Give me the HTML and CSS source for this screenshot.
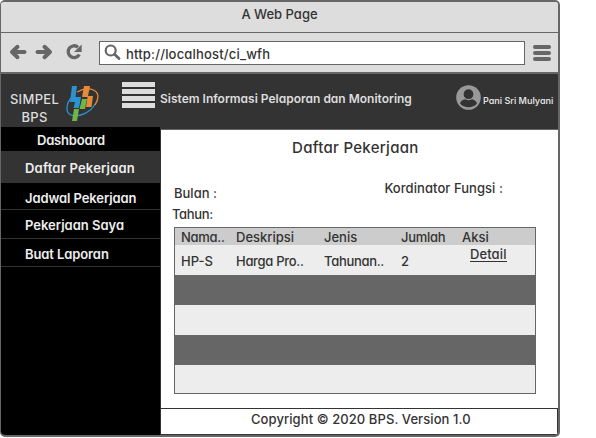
FILE: index.html
```html
<!DOCTYPE html>
<html lang="id">
<head>
<meta charset="utf-8">
<title>A Web Page</title>
<link rel="stylesheet" href="styles.css">
</head>
<body>
<div class="window">
  <div class="titlebar"><span class="t-title">A Web Page</span></div>
  <div class="toolbar">
    <svg class="nav" width="76" height="18" viewBox="0 0 76 18" fill="none" stroke="#666">
      <path d="M15.500 9H4M8.500 3.800L3 9l5.500 5.200" stroke-width="4" stroke-linecap="round" stroke-linejoin="round"/>
      <path d="M28.500 9h12M35.500 3.800L41 9l-5.500 5.200" stroke-width="4" stroke-linecap="round" stroke-linejoin="round"/>
      <path d="M69 4.200A5.900 5.900 0 1 0 70.300 11.500" stroke-width="3.300"/>
      <path d="M72.700 1.500v7.500h-7.700z" fill="#666" stroke="none"/>
    </svg>
    <div class="address">
      <svg width="17" height="17" viewBox="0 0 17 17" fill="none" stroke="#666"><circle cx="6.700" cy="6.500" r="5" stroke-width="2.200"/><path d="M10.500 10.300l4.500 4.300" stroke-width="2.800" stroke-linecap="round"/></svg>
      <span class="t-url">http://localhost/ci_wfh</span>
    </div>
    <div class="menu"><i></i><i></i><i></i></div>
  </div>
  <header class="header">
    <div class="brand"><span>SIMPEL</span><span>BPS</span></div>
    <svg class="logo" width="34" height="38" viewBox="0 0 34 38">
      <path d="M6 12C0 18-1 28 5 30c8 3 20-3 24-11" fill="none" stroke="#2b93d0" stroke-width="1.300"/>
      <path d="M11 7c9-5 20-4 21 4 0 4-1 6-3 9" fill="none" stroke="#e58b3a" stroke-width="1.300"/>
      <path d="M6 1h5l-1.500 11H15l-2 11H7.500l1.500-6H4z" fill="#2b93d0"/>
      <path d="M18 1h6l-2 10h5l-1.500 11h-5.500l1.500-10h-5.500z" fill="#e58b3a"/>
      <path d="M16 14h5l-2 10h-6l-2 12H6l2-12h5.500z" fill="#6fb644"/>
    </svg>
    <div class="bars"><i></i><i></i><i></i><i></i></div>
    <span class="t-system">Sistem Informasi Pelaporan dan Monitoring</span>
    <svg class="avatar" width="25" height="25" viewBox="0 0 25 25"><circle cx="12.500" cy="12.500" r="12.300" fill="#999"/><path d="M4 18.500c1-3 3.500-4 6-4.500 1.500 1 3.500 1 5 0 2.500.5 5 1.500 6 4.500-4 5-13 5-17 0z" fill="#333"/><circle cx="12.500" cy="9.200" r="5.500" fill="#333" stroke="#999" stroke-width="1.200"/></svg>
    <span class="t-user">Pani Sri Mulyani</span>
  </header>
  <div class="body">
    <nav class="sidebar">
      <a class="item first"><span class="t-dash">Dashboard</span></a>
      <a class="item active"><span class="t-daftar">Daftar Pekerjaan</span></a>
      <a class="item jadwal"><span class="t-jadwal">Jadwal Pekerjaan</span></a>
      <a class="item saya"><span class="t-saya">Pekerjaan Saya</span></a>
      <a class="item buat"><span class="t-buat">Buat Laporan</span></a>
    </nav>
    <main class="main">
      <h1><span class="t-head">Daftar Pekerjaan</span></h1>
      <div class="filters">
        <div class="left"><span class="t-bulan">Bulan :</span><span class="t-tahun">Tahun:</span></div>
        <span class="t-kord">Kordinator Fungsi :</span>
      </div>
      <div class="table">
        <div class="row head"><span class="c-tight">Nama..</span><span>Deskripsi</span><span class="c-jenis">Jenis</span><span class="c-tight">Jumlah</span><span>Aksi</span></div>
        <div class="row"><span>HP-S</span><span class="c-tight">Harga Pro..</span><span class="c-tight">Tahunan..</span><span>2</span><a class="detail">Detail</a></div>
        <div class="row dark"></div>
        <div class="row"></div>
        <div class="row dark"></div>
        <div class="row last"></div>
      </div>
      <footer><span class="t-copy">Copyright © 2020 BPS. Version 1.0</span></footer>
    </main>
  </div>
</div>
</body>
</html>
```
FILE: styles.css
```css
* { box-sizing: border-box; }
body {
  margin: 0;
  background: #fff;
  color: #333;
  font: 500 13px/18px Inter, "Liberation Sans", sans-serif;
  font-feature-settings: "cv11", "ss03";
  white-space: nowrap;
}
.window {
  width: 560px;
  height: 437px;
  border: 2px solid #666;
  border-left-width: 1px;
  border-radius: 5px;
  overflow: hidden;
  display: flex;
  flex-direction: column;
}
.titlebar {
  height: 31px;
  flex: none;
  background: #ddd;
  border-bottom: 1px solid #666;
  text-align: center;
  padding-top: 3px;
}
.toolbar {
  height: 41px;
  flex: none;
  background: #ddd;
  border-bottom: 2px solid #666;
  display: flex;
  align-items: flex-start;
  padding: 8px 0 0 9px;
}
.nav { flex: none; margin: 2px 1px 0 -1px; }
.address {
  width: 426px;
  height: 24px;
  margin-left: 13px;
  background: #fff;
  border: 1px solid #666;
  display: flex;
  align-items: center;
  padding: 0 0 0 4px;
  gap: 5px;
}
.address svg { flex: none; margin-bottom: 2px; }
.t-url { letter-spacing: 0.18px; padding-top: 2px; }
.menu { width: 18px; margin: 4px 0 0 8px; display: grid; gap: 2px; }
.menu i { height: 4px; border-radius: 2px; background: #666; }
.header {
  height: 53px;
  flex: none;
  background: #333;
  color: #ddd;
  display: flex;
  align-items: flex-start;
}
.brand {
  width: 53px;
  margin: 16px 0 0 7px;
  display: grid;
  text-align: center;
  letter-spacing: 0.3px;
  font-weight: 550;
}
.logo { margin: 11px 0 0 5px; flex: none; }
.bars { width: 33px; margin: 8px 0 0 22px; display: grid; gap: 2px; flex: none; }
.bars i { height: 5px; background: #ddd; }
.t-system { width: 252px; margin: 16px 0 0 5px; font-size: 12px; font-weight: 600; }
.avatar { margin: 11px 0 0 44px; flex: none; }
.t-user { margin: 18px 0 0 2px; font-size: 9px; font-weight: 600; }
.body { display: flex; flex: 1; }
.sidebar { width: 160px; background: #000; color: #eee; border-right: 1px solid #333; font-weight: 600; }
.item { display: block; padding-left: 24px; border-bottom: 1px solid #333; }
.first { height: 25px; padding: 4px 0 0 36px; }
.active { height: 31px; background: #333; padding-top: 7px; }
.jadwal { height: 27px; padding-top: 6px; }
.saya { height: 29px; padding-top: 6px; }
.buat { height: 28px; padding-top: 6px; }
.t-dash { letter-spacing: -0.2px; }
.t-daftar { letter-spacing: 0.2px; }
.t-jadwal { letter-spacing: -0.1px; }
.t-buat { letter-spacing: -0.1px; }
.main { flex: 1; border-top: 2px solid #333; display: flex; flex-direction: column; }
h1 { margin: 0; height: 51px; padding: 9px 0 0 131px; border-top: 1px solid #666; font-size: 15px; font-weight: 450; }
.t-head { letter-spacing: 0.3px; }
.filters { height: 47px; display: flex; justify-content: space-between; padding: 0 55px 0 11px; }
.left { display: grid; grid-template-rows: 21px 18px; padding-top: 4px; align-content: start; }
.t-bulan { padding-left: 2px; }
.t-tahun { letter-spacing: -0.35px; }
.t-kord { margin-top: -1px; letter-spacing: 0.06px; }
.table { width: 362px; height: 167px; margin-left: 13px; border: 1px solid #666; }
.row {
  height: 30px;
  background: #ededed;
  display: grid;
  grid-template-columns: 55px 88px 77px 61px 1fr;
  padding: 7px 0 0 6px;
}
.head { height: 17px; background: #ccc; padding-top: 0; line-height: 19px; }
.last { height: 28px; }
.dark { background: #666; }
.c-tight { letter-spacing: -0.3px; }
.detail { justify-self: start; align-self: start; margin: -5px 0 0 8px; height: 15px; line-height: 15px; letter-spacing: 0.1px; border-bottom: 1px solid #333; }
footer { height: 27px; margin-top: 14px; border: 1px solid #333; border-left: 0; padding: 1px 0 0 90px; }
.t-copy { letter-spacing: 0.08px; }
```
